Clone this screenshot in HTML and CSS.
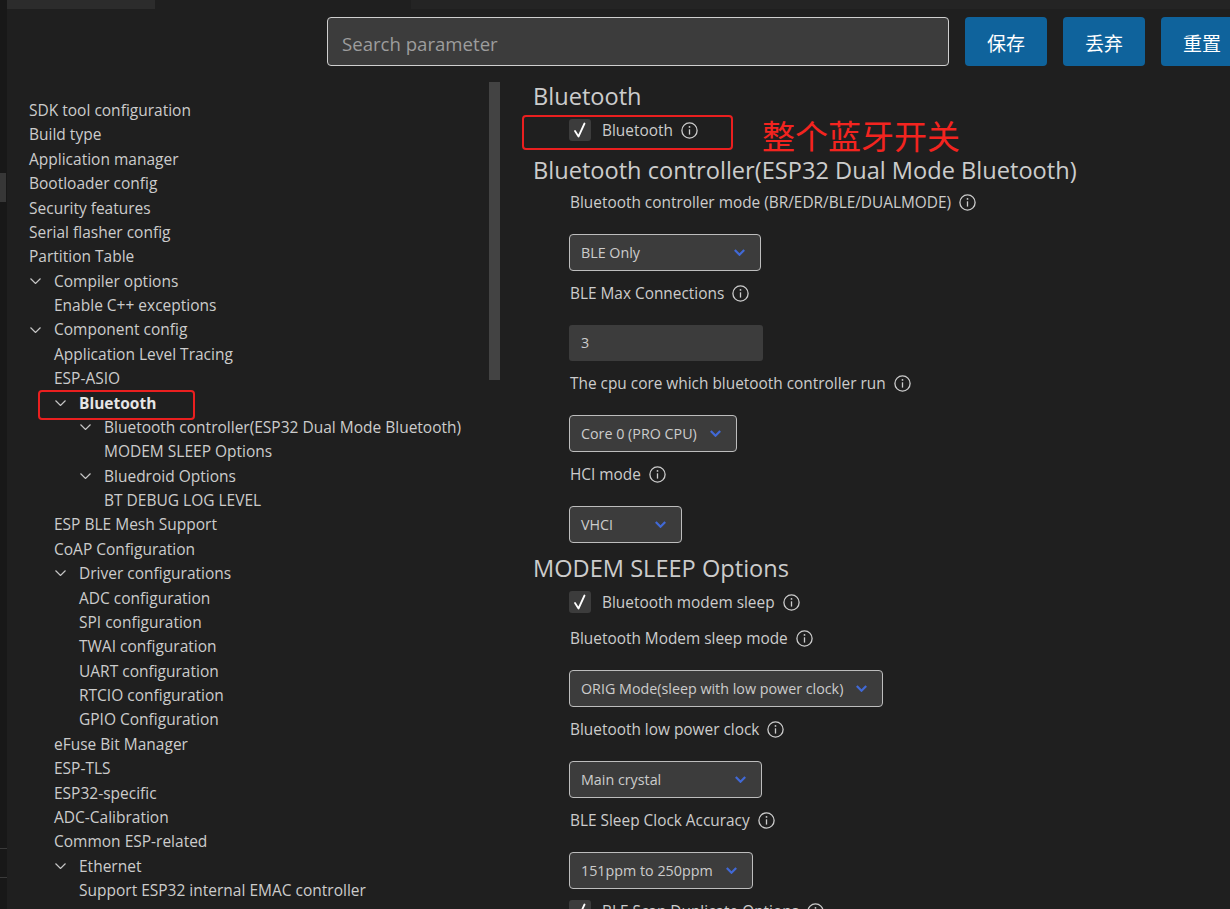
FILE: index.html
```html
<!DOCTYPE html>
<html lang="en">
<head>
<meta charset="utf-8">
<title>SDK Configuration Editor</title>
<link rel="stylesheet" href="styles.css">
</head>
<body>
<div class="app">
  <div class="edge">
    <div class="edge-mark"></div>
    <div class="edge-line edge-line-a"></div>
    <div class="edge-line edge-line-b"></div>
  </div>
  <div class="main">
    <div class="tabstrip">
      <div class="tab tab-a"></div>
      <div class="tab-gap"></div>
      <div class="tab tab-b"></div>
    </div>
    <div class="toolbar">
      <div class="search">Search parameter</div>
      <button class="btn">保存</button>
      <button class="btn">丢弃</button>
      <button class="btn">重置</button>
    </div>
    <div class="body">
      <nav class="tree">
        <div class="scrollthumb"></div>
        <div class="row d0">SDK tool configuration</div>
        <div class="row d0">Build type</div>
        <div class="row d0">Application manager</div>
        <div class="row d0">Bootloader config</div>
        <div class="row d0">Security features</div>
        <div class="row d0">Serial flasher config</div>
        <div class="row d0">Partition Table</div>
        <div class="row d0"><svg class="chev" viewBox="0 0 11 6"><polyline points="0.5,0.5 5.5,5.5 10.5,0.5"/></svg>Compiler options</div>
        <div class="row d1">Enable C++ exceptions</div>
        <div class="row d0"><svg class="chev" viewBox="0 0 11 6"><polyline points="0.5,0.5 5.5,5.5 10.5,0.5"/></svg>Component config</div>
        <div class="row d1">Application Level Tracing</div>
        <div class="row d1">ESP-ASIO</div>
        <div class="row d1 active"><svg class="chev" viewBox="0 0 11 6"><polyline points="0.5,0.5 5.5,5.5 10.5,0.5"/></svg>Bluetooth<span class="mark mark-tree"></span></div>
        <div class="row d2"><svg class="chev" viewBox="0 0 11 6"><polyline points="0.5,0.5 5.5,5.5 10.5,0.5"/></svg>Bluetooth controller(ESP32 Dual Mode Bluetooth)</div>
        <div class="row d3">MODEM SLEEP Options</div>
        <div class="row d2"><svg class="chev" viewBox="0 0 11 6"><polyline points="0.5,0.5 5.5,5.5 10.5,0.5"/></svg>Bluedroid Options</div>
        <div class="row d3">BT DEBUG LOG LEVEL</div>
        <div class="row d1">ESP BLE Mesh Support</div>
        <div class="row d1">CoAP Configuration</div>
        <div class="row d1"><svg class="chev" viewBox="0 0 11 6"><polyline points="0.5,0.5 5.5,5.5 10.5,0.5"/></svg>Driver configurations</div>
        <div class="row d2">ADC configuration</div>
        <div class="row d2">SPI configuration</div>
        <div class="row d2">TWAI configuration</div>
        <div class="row d2">UART configuration</div>
        <div class="row d2">RTCIO configuration</div>
        <div class="row d2">GPIO Configuration</div>
        <div class="row d1">eFuse Bit Manager</div>
        <div class="row d1">ESP-TLS</div>
        <div class="row d1">ESP32-specific</div>
        <div class="row d1">ADC-Calibration</div>
        <div class="row d1">Common ESP-related</div>
        <div class="row d1"><svg class="chev" viewBox="0 0 11 6"><polyline points="0.5,0.5 5.5,5.5 10.5,0.5"/></svg>Ethernet</div>
        <div class="row d2">Support ESP32 internal EMAC controller</div>
      </nav>
      <section class="content">
        <h2 class="title">Bluetooth</h2>
        <div class="check-row first">
          <span class="box"><svg viewBox="0 0 22 22"><polyline points="6,12 9.5,17.5 15.5,4.5"/></svg></span>
          <span class="check-label">Bluetooth</span>
          <svg class="info" viewBox="0 0 17 17"><circle cx="8.5" cy="8.5" r="7.6"/><line x1="8.5" y1="7.3" x2="8.5" y2="12.6"/><circle class="dot" cx="8.5" cy="4.9" r="0.9"/></svg>
          <span class="mark mark-check"></span>
          <span class="note">整个蓝牙开关</span>
        </div>
        <h2 class="title">Bluetooth controller(ESP32 Dual Mode Bluetooth)</h2>
        <div class="field">
          <div class="label">Bluetooth controller mode (BR/EDR/BLE/DUALMODE)<svg class="info" viewBox="0 0 17 17"><circle cx="8.5" cy="8.5" r="7.6"/><line x1="8.5" y1="7.3" x2="8.5" y2="12.6"/><circle class="dot" cx="8.5" cy="4.9" r="0.9"/></svg></div>
          <div class="select w-192"><span>BLE Only</span><svg class="dd" viewBox="0 0 11 7"><polyline points="0.8,1 5.5,5.7 10.2,1"/></svg></div>
        </div>
        <div class="field">
          <div class="label">BLE Max Connections<svg class="info" viewBox="0 0 17 17"><circle cx="8.5" cy="8.5" r="7.6"/><line x1="8.5" y1="7.3" x2="8.5" y2="12.6"/><circle class="dot" cx="8.5" cy="4.9" r="0.9"/></svg></div>
          <div class="input">3</div>
        </div>
        <div class="field">
          <div class="label">The cpu core which bluetooth controller run<svg class="info" viewBox="0 0 17 17"><circle cx="8.5" cy="8.5" r="7.6"/><line x1="8.5" y1="7.3" x2="8.5" y2="12.6"/><circle class="dot" cx="8.5" cy="4.9" r="0.9"/></svg></div>
          <div class="select"><span>Core 0 (PRO CPU)</span><svg class="dd" viewBox="0 0 11 7"><polyline points="0.8,1 5.5,5.7 10.2,1"/></svg></div>
        </div>
        <div class="field">
          <div class="label">HCI mode<svg class="info" viewBox="0 0 17 17"><circle cx="8.5" cy="8.5" r="7.6"/><line x1="8.5" y1="7.3" x2="8.5" y2="12.6"/><circle class="dot" cx="8.5" cy="4.9" r="0.9"/></svg></div>
          <div class="select w-113"><span>VHCI</span><svg class="dd" viewBox="0 0 11 7"><polyline points="0.8,1 5.5,5.7 10.2,1"/></svg></div>
        </div>
        <h2 class="title">MODEM SLEEP Options</h2>
        <div class="check-row">
          <span class="box"><svg viewBox="0 0 22 22"><polyline points="6,12 9.5,17.5 15.5,4.5"/></svg></span>
          <span class="check-label">Bluetooth modem sleep</span>
          <svg class="info" viewBox="0 0 17 17"><circle cx="8.5" cy="8.5" r="7.6"/><line x1="8.5" y1="7.3" x2="8.5" y2="12.6"/><circle class="dot" cx="8.5" cy="4.9" r="0.9"/></svg>
        </div>
        <div class="field">
          <div class="label">Bluetooth Modem sleep mode<svg class="info" viewBox="0 0 17 17"><circle cx="8.5" cy="8.5" r="7.6"/><line x1="8.5" y1="7.3" x2="8.5" y2="12.6"/><circle class="dot" cx="8.5" cy="4.9" r="0.9"/></svg></div>
          <div class="select"><span>ORIG Mode(sleep with low power clock)</span><svg class="dd" viewBox="0 0 11 7"><polyline points="0.8,1 5.5,5.7 10.2,1"/></svg></div>
        </div>
        <div class="field">
          <div class="label">Bluetooth low power clock<svg class="info" viewBox="0 0 17 17"><circle cx="8.5" cy="8.5" r="7.6"/><line x1="8.5" y1="7.3" x2="8.5" y2="12.6"/><circle class="dot" cx="8.5" cy="4.9" r="0.9"/></svg></div>
          <div class="select w-193"><span>Main crystal</span><svg class="dd" viewBox="0 0 11 7"><polyline points="0.8,1 5.5,5.7 10.2,1"/></svg></div>
        </div>
        <div class="field">
          <div class="label">BLE Sleep Clock Accuracy<svg class="info" viewBox="0 0 17 17"><circle cx="8.5" cy="8.5" r="7.6"/><line x1="8.5" y1="7.3" x2="8.5" y2="12.6"/><circle class="dot" cx="8.5" cy="4.9" r="0.9"/></svg></div>
          <div class="select"><span>151ppm to 250ppm</span><svg class="dd" viewBox="0 0 11 7"><polyline points="0.8,1 5.5,5.7 10.2,1"/></svg></div>
        </div>
        <div class="check-row last">
          <span class="box"><svg viewBox="0 0 22 22"><polyline points="6,12 9.5,17.5 15.5,4.5"/></svg></span>
          <span class="check-label">BLE Scan Duplicate Options</span>
          <svg class="info" viewBox="0 0 17 17"><circle cx="8.5" cy="8.5" r="7.6"/><line x1="8.5" y1="7.3" x2="8.5" y2="12.6"/><circle class="dot" cx="8.5" cy="4.9" r="0.9"/></svg>
        </div>
      </section>
    </div>
  </div>
</div>
</body>
</html>
```

FILE: styles.css
```css
* { box-sizing: border-box; }
html, body { margin: 0; padding: 0; }
body {
  background: #1f1f1f;
  color: #cccccc;
  font-family: "Open Sans", "Noto Sans", sans-serif;
  font-size: 15.5px;
  width: 1230px;
  height: 909px;
  overflow: hidden;
}
.app { display: flex; width: 1230px; height: 909px; overflow: hidden; }

.edge { position: relative; width: 7px; flex: none; background: #181818; }
.edge-mark { position: absolute; left: 0; top: 173px; width: 6px; height: 29px; background: #373737; }
.edge-line { position: absolute; left: 0; width: 7px; height: 1px; background: #3a3a3a; }
.edge-line-a { top: 848px; }
.edge-line-b { top: 877px; }

.main { flex: 1; display: flex; flex-direction: column; min-width: 0; }

.tabstrip { display: flex; height: 9px; flex: none; }
.tab-a { width: 148px; background: #2c2c2c; }
.tab-gap { width: 256px; }
.tab-b { flex: 1; background: #242424; }

.toolbar {
  display: flex;
  gap: 16px;
  padding: 8px 0 0 320px;
  height: 73px;
  flex: none;
  white-space: nowrap;
}
.search {
  width: 622px;
  height: 49px;
  flex: none;
  background: #3c3c3c;
  border: 1px solid #cfcfcf;
  border-radius: 4px;
  color: #9d9d9d;
  font-size: 18.6px;
  line-height: 43px;
  padding: 4px 0 0 14px;
}
.btn {
  width: 82px;
  height: 49px;
  flex: none;
  border: none;
  border-radius: 4px;
  background: #0f639c;
  color: #ffffff;
  font-family: "Noto Sans CJK SC", sans-serif;
  font-size: 19px;
  padding: 2px 0 0;
}

.body { flex: 1; display: flex; min-height: 0; }

.tree {
  position: relative;
  width: 493px;
  flex: none;
  padding-top: 16px;
}
.scrollthumb { position: absolute; right: 0; top: 0; width: 11px; height: 298px; background: #434343; }
.row {
  position: relative;
  height: 24.375px;
  line-height: 24.375px;
  display: flex;
  align-items: center;
  white-space: nowrap;
  color: #cccccc;
}
.row.d0 { padding-left: 22px; }
.row.d1 { padding-left: 47px; }
.row.d2 { padding-left: 72px; }
.row.d3 { padding-left: 97px; }
.chev {
  width: 11px;
  height: 6px;
  margin-left: 1px;
  margin-right: 13px;
  fill: none;
  stroke: #c5c5c5;
  stroke-width: 1.2;
  flex: none;
}
.row.active { font-weight: 700; color: #e6e6e6; }

.mark {
  position: absolute;
  border: 2.5px solid #ea1f1f;
  border-radius: 4px;
  pointer-events: none;
}
.mark-tree { left: 31px; top: -1px; width: 157px; height: 30px; }

.content { flex: 1; padding-left: 33px; min-width: 0; white-space: nowrap; font-size: 15.4px; }
.title {
  margin: -2px 0 0;
  font-size: 23.6px;
  font-weight: 400;
  line-height: 32px;
  height: 32px;
  color: #cccccc;
}
.check-row {
  position: relative;
  display: flex;
  align-items: center;
  height: 22px;
  margin: 7px 0 14px 36px;
}
.check-row.first { margin-bottom: 15px; }
.check-row.last { margin-top: 1px; }
.box {
  width: 22px;
  height: 22px;
  border-radius: 3px;
  background: #3c3c3c;
  flex: none;
  display: block;
}
.box svg { width: 22px; height: 22px; display: block; fill: none; stroke: #ffffff; stroke-width: 1.8; stroke-linecap: round; stroke-linejoin: round; }
.check-label { margin-left: 11px; }
.info {
  width: 17px;
  height: 17px;
  margin-left: 8px;
  flex: none;
  fill: none;
  stroke: #cccccc;
  stroke-width: 1.3;
}
.info .dot { fill: #cccccc; stroke: none; }
.mark-check { left: -47px; top: -4px; width: 211px; height: 35px; }
.note {
  position: absolute;
  left: 193px;
  top: -1px;
  font-family: "Noto Sans CJK SC", sans-serif;
  font-size: 33px;
  line-height: 34px;
  color: #f3241f;
}

.field { margin-left: 36px; margin-bottom: 11px; }
.title + .field { margin-top: 5px; }
.label {
  display: flex;
  align-items: center;
  height: 22px;
  margin-bottom: 21px;
  margin-left: 1px;
}
.select {
  display: inline-flex;
  align-items: center;
  justify-content: space-between;
  gap: 13px;
  height: 37px;
  padding: 0 15px 0 11px;
  background: #3c3c3c;
  border: 1px solid #bdbdbd;
  border-radius: 4px;
  color: #cccccc;
  font-size: 14.3px;
}
.select.w-192 { width: 192px; }
.select.w-193 { width: 193px; }
.select.w-113 { width: 113px; }
.dd { width: 11px; height: 7px; fill: none; stroke: #4169d6; stroke-width: 2.2; flex: none; }
.input {
  width: 194px;
  height: 36px;
  line-height: 36px;
  padding-left: 12px;
  background: #3c3c3c;
  border-radius: 3px;
  color: #cccccc;
  font-size: 14.3px;
}
```
